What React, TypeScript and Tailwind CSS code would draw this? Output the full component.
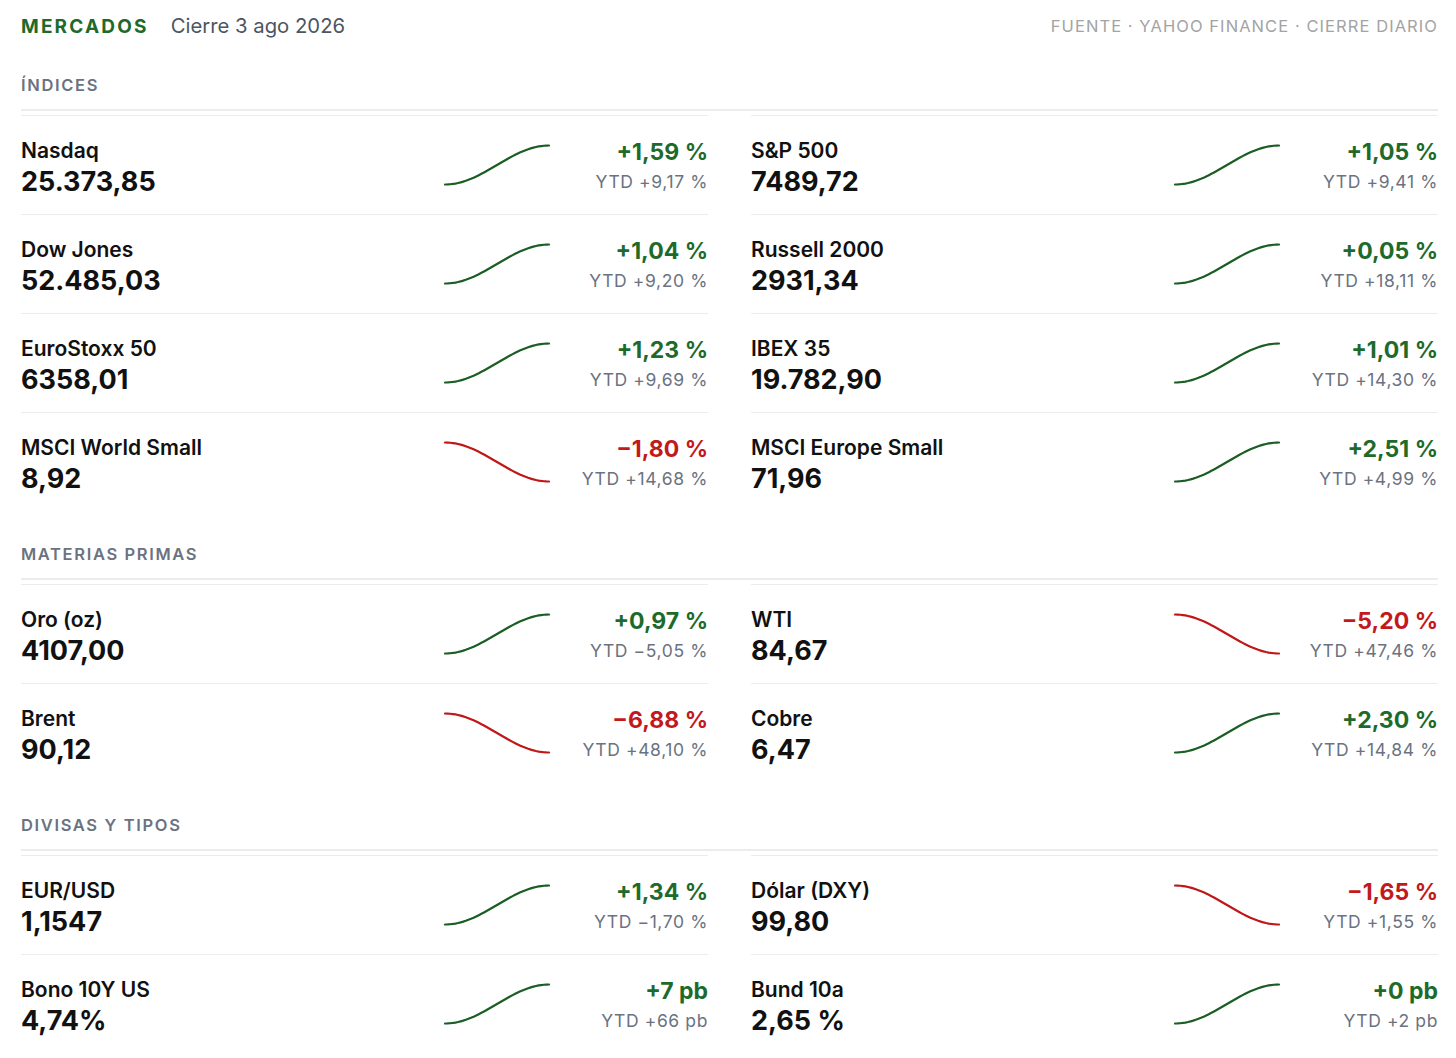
import React from "react";

type Item = { name: string; value: string; change: string; ytd: string; up: boolean };

const sections: { title: string; items: Item[] }[] = [
  {
    title: "ÍNDICES",
    items: [
      { name: "Nasdaq", value: "25.373,85", change: "+1,59 %", ytd: "YTD +9,17 %", up: true },
      { name: "S&P 500", value: "7489,72", change: "+1,05 %", ytd: "YTD +9,41 %", up: true },
      { name: "Dow Jones", value: "52.485,03", change: "+1,04 %", ytd: "YTD +9,20 %", up: true },
      { name: "Russell 2000", value: "2931,34", change: "+0,05 %", ytd: "YTD +18,11 %", up: true },
      { name: "EuroStoxx 50", value: "6358,01", change: "+1,23 %", ytd: "YTD +9,69 %", up: true },
      { name: "IBEX 35", value: "19.782,90", change: "+1,01 %", ytd: "YTD +14,30 %", up: true },
      { name: "MSCI World Small", value: "8,92", change: "\u22121,80 %", ytd: "YTD +14,68 %", up: false },
      { name: "MSCI Europe Small", value: "71,96", change: "+2,51 %", ytd: "YTD +4,99 %", up: true },
    ],
  },
  {
    title: "MATERIAS PRIMAS",
    items: [
      { name: "Oro (oz)", value: "4107,00", change: "+0,97 %", ytd: "YTD \u22125,05 %", up: true },
      { name: "WTI", value: "84,67", change: "\u22125,20 %", ytd: "YTD +47,46 %", up: false },
      { name: "Brent", value: "90,12", change: "\u22126,88 %", ytd: "YTD +48,10 %", up: false },
      { name: "Cobre", value: "6,47", change: "+2,30 %", ytd: "YTD +14,84 %", up: true },
    ],
  },
  {
    title: "DIVISAS Y TIPOS",
    items: [
      { name: "EUR/USD", value: "1,1547", change: "+1,34 %", ytd: "YTD \u22121,70 %", up: true },
      { name: "Dólar (DXY)", value: "99,80", change: "\u22121,65 %", ytd: "YTD +1,55 %", up: false },
      { name: "Bono 10Y US", value: "4,74%", change: "+7 pb", ytd: "YTD +66 pb", up: true },
      { name: "Bund 10a", value: "2,65 %", change: "+0 pb", ytd: "YTD +2 pb", up: true },
    ],
  },
];

function sparkPath(up: boolean) {
  const w = 106;
  const h = 42;
  const pts: string[] = [];
  for (let i = 0; i <= 40; i++) {
    const t = i / 40;
    const s = 0.5 - 0.5 * Math.cos(Math.PI * t);
    const x = t * (w - 2) + 1;
    const y = up ? h - 1.5 - s * (h - 3) : 1.5 + s * (h - 3);
    pts.push(`${x.toFixed(2)},${y.toFixed(2)}`);
  }
  return "M" + pts.join(" L");
}

function Spark({ up }: { up: boolean }) {
  return (
    <svg width="106" height="42" viewBox="0 0 106 42" className="mt-[28px] shrink-0">
      <path
        d={sparkPath(up)}
        fill="none"
        stroke={up ? "#1a5e23" : "#c01818"}
        strokeWidth="2.2"
        strokeLinecap="round"
        strokeLinejoin="round"
      />
    </svg>
  );
}

function Row({ it }: { it: Item }) {
  return (
    <div className="flex h-[99px] border-t border-[#ececec]">
      <div className="flex-1 pt-[21px]">
        <div className="text-[21px] leading-[28px] font-semibold text-[#111111]">{it.name}</div>
        <div className="text-[27px] leading-[34px] font-bold text-[#111111]">{it.value}</div>
      </div>
      <Spark up={it.up} />
      <div className="w-[158px] shrink-0 pt-[22px] text-right">
        <div
          className={
            "text-[23px] leading-[28px] font-bold " + (it.up ? "text-[#1e6a2b]" : "text-[#c2191c]")
          }
        >
          {it.change}
        </div>
        <div className="mt-[4px] text-[17.5px] leading-[24px] tracking-[0.035em] text-[#6b7280]">{it.ytd}</div>
      </div>
    </div>
  );
}

export default function App() {
  return (
    <div
      className="min-h-[1058px] w-[1456px] bg-white pl-[21px] pr-[18px]"
      style={{ fontFamily: "Inter, 'Noto Sans', sans-serif" }}
    >
      <div className="flex h-[52px] items-center justify-between pt-[1px]">
        <div className="flex items-baseline">
          <span className="text-[19px] font-bold tracking-[0.115em] text-[#1e6a2b]">MERCADOS</span>
          <span className="ml-[22px] text-[20.3px] text-[#4b5563]">Cierre 3 ago 2026</span>
        </div>
        <span className="text-[16.5px] tracking-[0.065em] text-[#a3a3a3]">
          FUENTE · YAHOO FINANCE · CIERRE DIARIO
        </span>
      </div>
      {sections.map((sec, si) => (
        <div key={sec.title} className={si === 0 ? "mt-[23px]" : "mt-[33px]"}>
          <div className="border-b-2 border-[#ececec] pb-[14px] text-[16.5px] leading-[20px] font-semibold tracking-[0.1em] text-[#6b7280]">
            {sec.title}
          </div>
          <div className="mt-[4px] grid grid-cols-2 gap-x-[43px]">
            {sec.items.map((it) => (
              <Row key={it.name} it={it} />
            ))}
          </div>
        </div>
      ))}
    </div>
  );
}
